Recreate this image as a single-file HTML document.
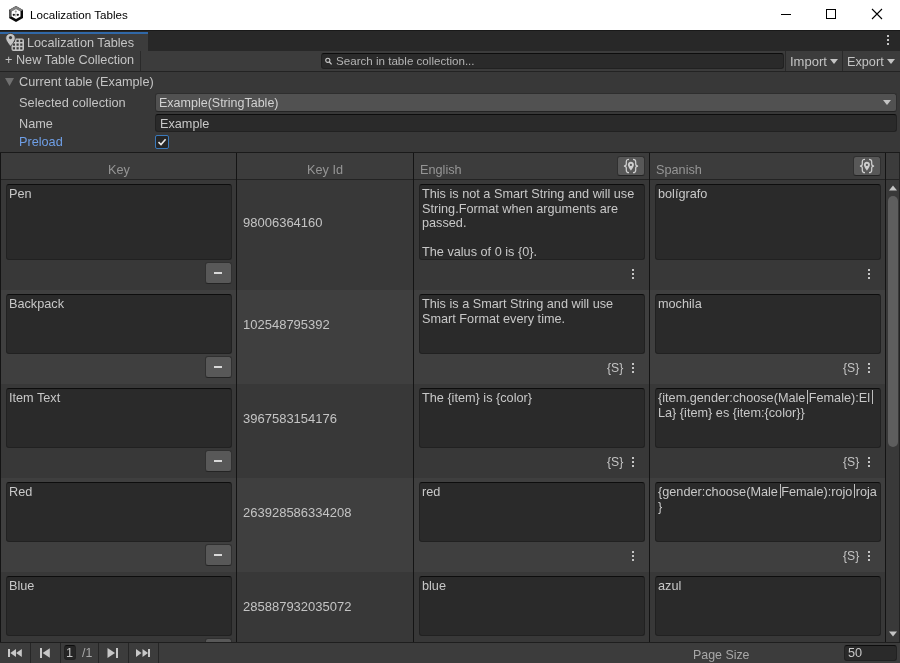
<!DOCTYPE html>
<html><head><meta charset="utf-8">
<style>
*{box-sizing:border-box;margin:0;padding:0}
html,body{width:900px;height:663px;overflow:hidden;background:#383838}
body{position:relative;-webkit-font-smoothing:antialiased;font-family:"Liberation Sans",sans-serif;font-size:12.7px;color:#c4c4c4}
.a{position:absolute}
.t{position:absolute;will-change:transform;white-space:pre;line-height:14.5px;font-size:12.7px}
.fld{position:absolute;background:#2a2a2a;border:1px solid #212121;border-top-color:#0d0d0d;border-radius:3px}
.btn{position:absolute;background:#585858;border:1px solid #303030;border-bottom-color:#242424;border-radius:3px}
.sep{position:absolute;background:#191919}
.kb{position:absolute;width:2px;height:10px}
.kb i{position:absolute;left:0;width:2px;height:2px;background:#c4c4c4}
.kb i:nth-child(1){top:0}.kb i:nth-child(2){top:4px}.kb i:nth-child(3){top:8px}
.p{position:relative;color:transparent}.p::after{content:'';position:absolute;left:1.8px;top:-1.5px;width:1px;height:14.5px;background:#c0c0c0}
.ss{position:absolute;will-change:transform;font-size:12.2px;line-height:14px;color:#c4c4c4;white-space:pre}
</style></head><body>
<!-- title bar -->
<div class="a" style="left:0;top:0;width:900px;height:30px;background:#fff"></div>
<svg class="a" style="left:8px;top:5px" width="16" height="18" viewBox="0 0 16 18">
  <polygon points="8,1 15,5 15,13 8,17 1,13 1,5" fill="#0a0a0a"/>
  <polygon points="8,1 15,5 12.5,6.5 8,4 3.5,6.5 1,5" fill="#808080"/>
  <polygon points="1,5 3.5,6.5 3.5,11.5 1,13" fill="#555"/>
  <polygon points="8,4 12.5,6.5 12.5,11.5 8,14 3.5,11.5 3.5,6.5" fill="#fff"/>
  <circle cx="7.8" cy="6.6" r="1.1" fill="#9a9a9a"/>
  <rect x="7.3" y="8.5" width="1" height="3" fill="#9a9a9a"/>
  <circle cx="5.8" cy="9.8" r="1.15" fill="#1a1a1a"/>
  <circle cx="9.8" cy="9.8" r="1.15" fill="#1a1a1a"/>
</svg>
<div class="t" style="left:29.5px;top:7.7px;font-size:11.6px;color:#000">Localization Tables</div>
<div class="a" style="left:781px;top:14px;width:10px;height:1px;background:#000"></div>
<div class="a" style="left:826px;top:9px;width:10px;height:10px;border:1px solid #000"></div>
<svg class="a" style="left:871px;top:8px" width="12" height="12" viewBox="0 0 12 12"><path d="M1 1L11 11M11 1L1 11" stroke="#000" stroke-width="1.1"/></svg>

<!-- tab bar -->
<div class="a" style="left:0;top:30px;width:900px;height:21px;background:#282828;border-top:1px solid #191919"></div>
<div class="a" style="left:0;top:32px;width:148px;height:19px;background:#3c3c3c"></div>
<div class="a" style="left:0;top:32px;width:148px;height:2px;background:#3068a8"></div>
<svg class="a" style="left:5px;top:33px" width="20" height="18" viewBox="0 0 20 18">
  <rect x="6.5" y="5.5" width="12.5" height="12.5" rx="2" fill="#c4c4c4"/>
  <g fill="#3c3c3c">
   <rect x="7.8" y="6.8" width="2.2" height="2.2"/><rect x="11.5" y="6.8" width="2.2" height="2.2"/><rect x="15.2" y="6.8" width="2.2" height="2.2"/>
   <rect x="7.8" y="10.5" width="2.2" height="2.2"/><rect x="11.5" y="10.5" width="2.2" height="2.2"/><rect x="15.2" y="10.5" width="2.2" height="2.2"/>
   <rect x="7.8" y="14.2" width="2.2" height="2.2"/><rect x="11.5" y="14.2" width="2.2" height="2.2"/><rect x="15.2" y="14.2" width="2.2" height="2.2"/>
  </g>
  <path d="M5.5 0.4C2.9 0.4 0.7 2.5 0.7 5.1C0.7 8.3 5.5 13.4 5.5 13.4C5.5 13.4 10.3 8.3 10.3 5.1C10.3 2.5 8.1 0.4 5.5 0.4Z" fill="#c4c4c4" stroke="#3c3c3c" stroke-width="0.9"/>
  <circle cx="5.5" cy="4.6" r="1.6" fill="#3c3c3c"/>
</svg>
<div class="t" style="left:27px;top:35.8px;font-size:12.7px;color:#c4c4c4">Localization Tables</div>
<div class="kb" style="left:887px;top:35px"><i></i><i></i><i></i></div>

<!-- toolbar -->
<div class="a" style="left:0;top:51px;width:900px;height:21px;background:#3c3c3c;border-bottom:1px solid #232323"></div>
<div class="t" style="left:5px;top:53px;font-size:12.7px">+ New Table Collection</div>
<div class="sep" style="left:140px;top:51px;width:1px;height:20px;background:#2a2a2a"></div>
<div class="fld" style="left:321px;top:53px;width:463px;height:16px;border-radius:3px"></div>
<svg class="a" style="left:325px;top:57px" width="9" height="9" viewBox="0 0 9 9"><circle cx="2.8" cy="3.3" r="2.1" fill="none" stroke="#c8c8c8" stroke-width="1.1"/><path d="M4.4 5L6.6 7.4" stroke="#c8c8c8" stroke-width="1.3"/></svg>
<div class="t" style="left:336px;top:54px;font-size:11.6px;color:#b4b4b4">Search in table collection...</div>
<div class="sep" style="left:785px;top:51px;width:1px;height:20px;background:#2a2a2a"></div>
<div class="t" style="left:790px;top:55px;font-size:13px">Import</div>
<svg class="a" style="left:830px;top:59px" width="8" height="5" viewBox="0 0 8 5"><path d="M0 0H8L4 5Z" fill="#c4c4c4"/></svg>
<div class="sep" style="left:842px;top:51px;width:1px;height:20px;background:#2a2a2a"></div>
<div class="t" style="left:847px;top:55px;font-size:12.7px">Export</div>
<svg class="a" style="left:887px;top:59px" width="8" height="5" viewBox="0 0 8 5"><path d="M0 0H8L4 5Z" fill="#c4c4c4"/></svg>

<!-- inspector section -->
<svg class="a" style="left:5px;top:78px" width="9" height="8" viewBox="0 0 9 8"><path d="M0 0H9L4.5 8Z" fill="#707070"/></svg>
<div class="t" style="left:19px;top:74.5px;font-size:12.7px">Current table (Example)</div>
<div class="t" style="left:19px;top:96px;font-size:12.8px">Selected collection</div>
<div class="t" style="left:19px;top:116.5px;font-size:12.7px">Name</div>
<div class="t" style="left:19px;top:135px;font-size:12.7px;color:#6f9fe6">Preload</div>
<div class="a" style="left:155px;top:93px;width:742px;height:19px;background:#515151;border:1px solid #2e2e2e;border-bottom-color:#242424;border-radius:3px"></div>
<div class="t" style="left:159px;top:96px;font-size:12.5px;color:#d2d2d2">Example(StringTable)</div>
<svg class="a" style="left:883px;top:100px" width="8" height="5" viewBox="0 0 8 5"><path d="M0 0H8L4 5Z" fill="#c4c4c4"/></svg>
<div class="fld" style="left:155px;top:114px;width:742px;height:18px"></div>
<div class="t" style="left:160px;top:117px;font-size:12.7px;color:#c8c8c8">Example</div>
<div class="a" style="left:155px;top:135px;width:14px;height:14px;background:#252525;border:1px solid #3a79bb;border-radius:2px"></div>
<svg class="a" style="left:157px;top:137px" width="10" height="10" viewBox="0 0 10 10"><path d="M1.5 5.2L4 7.6L8.6 2.2" fill="none" stroke="#e8e8e8" stroke-width="1.6"/></svg>

<!-- TABLE -->
<div id="table">
<div class="a" style="left:0;top:152px;width:900px;height:1px;background:#1a1a1a"></div>
<div class="a" style="left:0;top:153px;width:900px;height:26px;background:#3c3c3c"></div>
<div class="a" style="left:0;top:179px;width:900px;height:1px;background:#232323"></div>
<div class="a" style="left:1px;top:180px;width:885px;height:110px;background:#383838"></div>
<div class="a" style="left:1px;top:290px;width:885px;height:94px;background:#3f3f3f"></div>
<div class="a" style="left:1px;top:384px;width:885px;height:94px;background:#383838"></div>
<div class="a" style="left:1px;top:478px;width:885px;height:94px;background:#3f3f3f"></div>
<div class="a" style="left:1px;top:572px;width:885px;height:70px;background:#383838"></div>
<div class="t" style="left:107.5px;top:163px;color:#959595">Key</div>
<div class="t" style="left:306.5px;top:163px;color:#959595">Key Id</div>
<div class="t" style="left:419.5px;top:163px;color:#959595">English</div>
<div class="t" style="left:655.5px;top:163px;color:#959595">Spanish</div>
<div class="btn" style="left:617px;top:156px;width:28px;height:20px"></div>
<svg class="a" style="left:623px;top:158px" width="16" height="16" viewBox="0 0 16 16" fill="none" stroke="#cfcfcf" stroke-width="1.25">
<path d="M6 1.3C4.2 1.3 3.3 2 3.3 3.8V6C3.3 7.2 2.4 8 0.9 8C2.4 8 3.3 8.8 3.3 10V12.2C3.3 14 4.2 14.7 6 14.7"/>
<path d="M10 1.3C11.8 1.3 12.7 2 12.7 3.8V6C12.7 7.2 13.6 8 15.1 8C13.6 8 12.7 8.8 12.7 10V12.2C12.7 14 11.8 14.7 10 14.7"/>
<path d="M7.9 3.8C6.2 3.8 4.9 5.1 4.9 6.8C4.9 8.8 7.9 12.6 7.9 12.6C7.9 12.6 10.9 8.8 10.9 6.8C10.9 5.1 9.6 3.8 7.9 3.8Z" fill="#cfcfcf" stroke="none"/>
<circle cx="7.9" cy="6.9" r="1.15" fill="#585858" stroke="none"/>
</svg>
<div class="btn" style="left:853px;top:156px;width:28px;height:20px"></div>
<svg class="a" style="left:859px;top:158px" width="16" height="16" viewBox="0 0 16 16" fill="none" stroke="#cfcfcf" stroke-width="1.25">
<path d="M6 1.3C4.2 1.3 3.3 2 3.3 3.8V6C3.3 7.2 2.4 8 0.9 8C2.4 8 3.3 8.8 3.3 10V12.2C3.3 14 4.2 14.7 6 14.7"/>
<path d="M10 1.3C11.8 1.3 12.7 2 12.7 3.8V6C12.7 7.2 13.6 8 15.1 8C13.6 8 12.7 8.8 12.7 10V12.2C12.7 14 11.8 14.7 10 14.7"/>
<path d="M7.9 3.8C6.2 3.8 4.9 5.1 4.9 6.8C4.9 8.8 7.9 12.6 7.9 12.6C7.9 12.6 10.9 8.8 10.9 6.8C10.9 5.1 9.6 3.8 7.9 3.8Z" fill="#cfcfcf" stroke="none"/>
<circle cx="7.9" cy="6.9" r="1.15" fill="#585858" stroke="none"/>
</svg>
<div class="a" style="left:0px;top:153px;width:1px;height:489px;background:#141414"></div>
<div class="a" style="left:236px;top:153px;width:1px;height:489px;background:#141414"></div>
<div class="a" style="left:413px;top:153px;width:1px;height:489px;background:#141414"></div>
<div class="a" style="left:649px;top:153px;width:1px;height:489px;background:#141414"></div>
<div class="a" style="left:885px;top:153px;width:1px;height:489px;background:#141414"></div>
<div class="a" style="left:899px;top:153px;width:1px;height:489px;background:#232323"></div>
<div class="a" style="left:886px;top:180px;width:13px;height:462px;background:#393939"></div>
<svg class="a" style="left:888px;top:185px" width="10" height="6" viewBox="0 0 10 6"><path d="M1 5.5H9L5 0.5Z" fill="#c4c4c4"/></svg>
<div class="a" style="left:888px;top:196px;width:10px;height:251px;background:#5e5e5e;border-radius:5px"></div>
<svg class="a" style="left:888px;top:631px" width="10" height="6" viewBox="0 0 10 6"><path d="M1 0.5H9L5 5.5Z" fill="#c4c4c4"/></svg>
<div class="fld" style="left:6px;top:184px;width:226px;height:76px"></div>
<div class="t" style="left:9.3px;top:187.35px;color:#c8c8c8">Pen</div>
<div class="btn" style="left:205px;top:262px;width:27px;height:22px"></div>
<div class="a" style="left:214px;top:272px;width:8px;height:2px;background:#d8d8d8"></div>
<div class="t" style="left:243px;top:216.24px;font-size:13px;color:#c4c4c4">98006364160</div>
<div class="fld" style="left:419px;top:184px;width:226px;height:76px"></div>
<div class="t" style="left:422.3px;top:187.35px;color:#c8c8c8">This is not a Smart String and will use
String.Format when arguments are
passed.

The valus of 0 is {0}.</div>
<div class="kb" style="left:632px;top:269px"><i></i><i></i><i></i></div>
<div class="fld" style="left:655px;top:184px;width:226px;height:76px"></div>
<div class="t" style="left:658px;top:187.35px;color:#c8c8c8">bolígrafo</div>
<div class="kb" style="left:868px;top:269px"><i></i><i></i><i></i></div>
<div class="fld" style="left:6px;top:294px;width:226px;height:60px"></div>
<div class="t" style="left:9.3px;top:297.35px;color:#c8c8c8">Backpack</div>
<div class="btn" style="left:205px;top:356px;width:27px;height:22px"></div>
<div class="a" style="left:214px;top:366px;width:8px;height:2px;background:#d8d8d8"></div>
<div class="t" style="left:243px;top:317.54px;font-size:13px;color:#c4c4c4">102548795392</div>
<div class="fld" style="left:419px;top:294px;width:226px;height:60px"></div>
<div class="t" style="left:422.3px;top:297.35px;color:#c8c8c8">This is a Smart String and will use
Smart Format every time.</div>
<div class="kb" style="left:632px;top:363px"><i></i><i></i><i></i></div>
<div class="ss" style="left:607px;top:361.2px">{S}</div>
<div class="fld" style="left:655px;top:294px;width:226px;height:60px"></div>
<div class="t" style="left:658px;top:297.35px;color:#c8c8c8">mochila</div>
<div class="kb" style="left:868px;top:363px"><i></i><i></i><i></i></div>
<div class="ss" style="left:843px;top:361.2px">{S}</div>
<div class="fld" style="left:6px;top:388px;width:226px;height:60px"></div>
<div class="t" style="left:9.3px;top:391.35px;color:#c8c8c8">Item Text</div>
<div class="btn" style="left:205px;top:450px;width:27px;height:22px"></div>
<div class="a" style="left:214px;top:460px;width:8px;height:2px;background:#d8d8d8"></div>
<div class="t" style="left:243px;top:411.54px;font-size:13px;color:#c4c4c4">3967583154176</div>
<div class="fld" style="left:419px;top:388px;width:226px;height:60px"></div>
<div class="t" style="left:422.3px;top:391.35px;color:#c8c8c8">The {item} is {color}</div>
<div class="kb" style="left:632px;top:457px"><i></i><i></i><i></i></div>
<div class="ss" style="left:607px;top:455.2px">{S}</div>
<div class="fld" style="left:655px;top:388px;width:226px;height:60px"></div>
<div class="t" style="left:658px;top:391.35px;color:#c8c8c8">{item.gender:choose(Male<span class="p">|</span>Female):El<span class="p">|</span>
La} {item} es {item:{color}}</div>
<div class="kb" style="left:868px;top:457px"><i></i><i></i><i></i></div>
<div class="ss" style="left:843px;top:455.2px">{S}</div>
<div class="fld" style="left:6px;top:482px;width:226px;height:60px"></div>
<div class="t" style="left:9.3px;top:485.35px;color:#c8c8c8">Red</div>
<div class="btn" style="left:205px;top:544px;width:27px;height:22px"></div>
<div class="a" style="left:214px;top:554px;width:8px;height:2px;background:#d8d8d8"></div>
<div class="t" style="left:243px;top:505.54px;font-size:13px;color:#c4c4c4">263928586334208</div>
<div class="fld" style="left:419px;top:482px;width:226px;height:60px"></div>
<div class="t" style="left:422.3px;top:485.35px;color:#c8c8c8">red</div>
<div class="kb" style="left:632px;top:551px"><i></i><i></i><i></i></div>
<div class="fld" style="left:655px;top:482px;width:226px;height:60px"></div>
<div class="t" style="left:658px;top:485.35px;color:#c8c8c8">{gender:choose(Male<span class="p">|</span>Female):rojo<span class="p">|</span>roja
}</div>
<div class="kb" style="left:868px;top:551px"><i></i><i></i><i></i></div>
<div class="ss" style="left:843px;top:549.2px">{S}</div>
<div class="fld" style="left:6px;top:576px;width:226px;height:60px"></div>
<div class="t" style="left:9.3px;top:579.35px;color:#c8c8c8">Blue</div>
<div class="btn" style="left:205px;top:638px;width:27px;height:22px"></div>
<div class="a" style="left:214px;top:648px;width:8px;height:2px;background:#d8d8d8"></div>
<div class="t" style="left:243px;top:599.54px;font-size:13px;color:#c4c4c4">285887932035072</div>
<div class="fld" style="left:419px;top:576px;width:226px;height:60px"></div>
<div class="t" style="left:422.3px;top:579.35px;color:#c8c8c8">blue</div>
<div class="kb" style="left:632px;top:645px"><i></i><i></i><i></i></div>
<div class="fld" style="left:655px;top:576px;width:226px;height:60px"></div>
<div class="t" style="left:658px;top:579.35px;color:#c8c8c8">azul</div>
<div class="kb" style="left:868px;top:645px"><i></i><i></i><i></i></div>
<div class="a" style="left:0;top:642px;width:900px;height:1px;background:#1e1e1e"></div>
<div class="a" style="left:0;top:643px;width:900px;height:20px;background:#3c3c3c"></div>
<div class="a" style="left:30px;top:643px;width:1px;height:20px;background:#262626"></div>
<div class="a" style="left:60px;top:643px;width:1px;height:20px;background:#262626"></div>
<div class="a" style="left:98px;top:643px;width:1px;height:20px;background:#262626"></div>
<div class="a" style="left:128px;top:643px;width:1px;height:20px;background:#262626"></div>
<div class="a" style="left:158px;top:643px;width:1px;height:20px;background:#262626"></div>
<svg class="a" style="left:8px;top:648px" width="15" height="10" viewBox="0 0 15 10" fill="#c8c8c8"><rect x="0" y="1" width="2" height="8"/><path d="M8 1V9L2.3 5Z"/><path d="M13.8 1V9L8.1 5Z"/></svg>
<svg class="a" style="left:40px;top:648px" width="11" height="10" viewBox="0 0 11 10" fill="#c8c8c8"><rect x="0" y="0" width="2" height="10"/><path d="M9.8 0.3V9.7L2.6 5Z"/></svg>
<div class="fld" style="left:64px;top:645px;width:12px;height:15px;background:#252525"></div>
<div class="t" style="left:66px;top:646.2px;font-size:12.7px;color:#c4c4c4">1</div>
<div class="t" style="left:81.5px;top:646.2px;font-size:12.4px;color:#a8a8a8">/1</div>
<svg class="a" style="left:107px;top:648px" width="12" height="10" viewBox="0 0 12 10" fill="#c8c8c8"><path d="M0.5 0V10L8 5Z"/><rect x="9" y="0" width="2" height="10"/></svg>
<svg class="a" style="left:136px;top:648px" width="15" height="10" viewBox="0 0 15 10" fill="#c8c8c8"><path d="M0 1V9L5.5 5Z"/><path d="M6.5 1V9L12 5Z"/><rect x="12" y="1" width="2" height="8"/></svg>
<div class="t" style="left:693px;top:647.8px;font-size:12.4px;color:#a8a8a8">Page Size</div>
<div class="fld" style="left:844px;top:645px;width:53px;height:16px"></div>
<div class="t" style="left:847.5px;top:646.4px;font-size:12.7px;color:#c8c8c8">50</div>
</div>
</body></html>
